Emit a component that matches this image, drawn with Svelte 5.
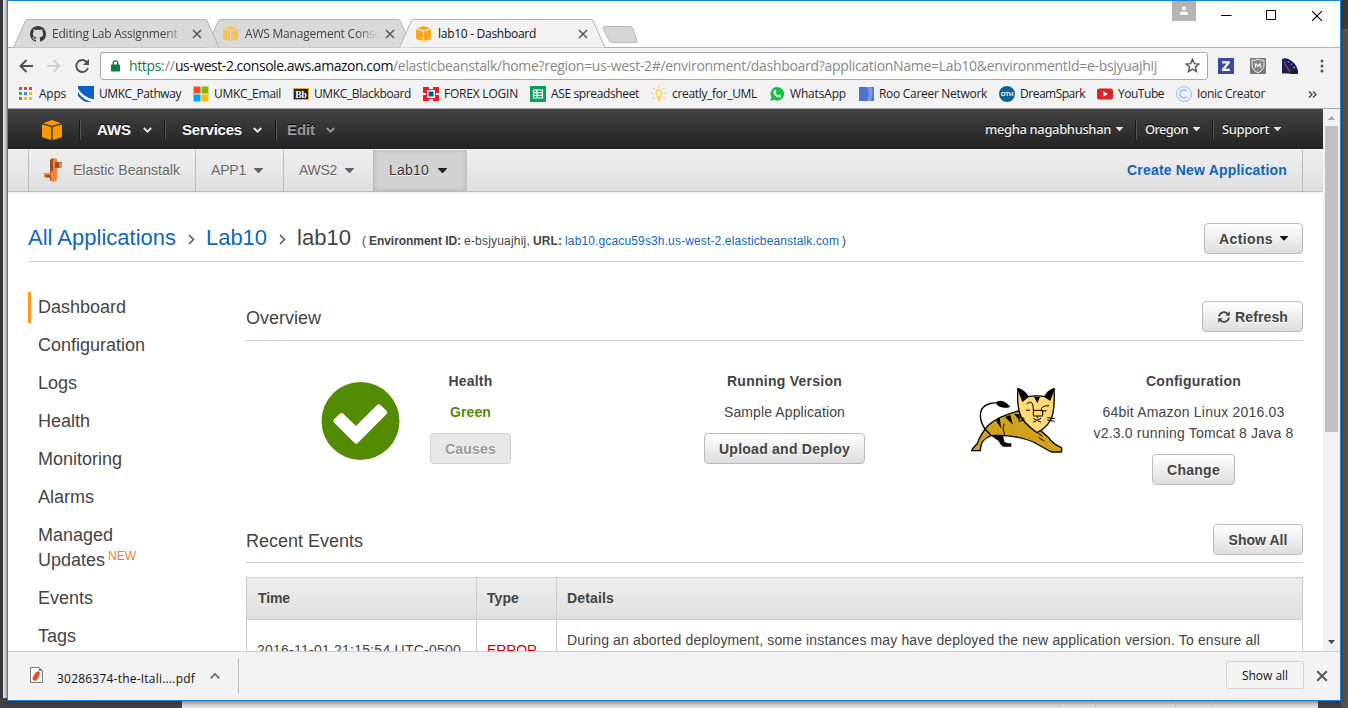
<script>
  const tabs = [
    { title: 'Editing Lab Assignment 1', icon: 'github', width: 135 },
    { title: 'AWS Management Console', icon: 'cube', width: 146 },
    { title: 'lab10 - Dashboard', icon: 'cube', width: 98, active: true }
  ];

  const bookmarks = [
    { label: 'Apps', icon: 'apps', width: 27 },
    { label: 'UMKC_Pathway', icon: 'pathway', width: 82 },
    { label: 'UMKC_Email', icon: 'email', width: 67 },
    { label: 'UMKC_Blackboard', icon: 'blackboard', width: 97 },
    { label: 'FOREX LOGIN', icon: 'forex', width: 74 },
    { label: 'ASE spreadsheet', icon: 'sheet', width: 88 },
    { label: 'creatly_for_UML', icon: 'bulb', width: 85 },
    { label: 'WhatsApp', icon: 'whatsapp', width: 56 },
    { label: 'Roo Career Network', icon: 'roo', width: 108 },
    { label: 'DreamSpark', icon: 'oth', width: 65 },
    { label: 'YouTube', icon: 'youtube', width: 46 },
    { label: 'Ionic Creator', icon: 'ionic', width: 68 }
  ];

  const appColors = ['#ea4335', '#ea4335', '#ea4335', '#34a853', '#4285f4', '#fbbc05', '#34a853', '#fbbc05', '#fbbc05'];

  const sideLinks = ['Dashboard', 'Configuration', 'Logs', 'Health', 'Monitoring', 'Alarms', 'Managed Updates', 'Events', 'Tags'];

  // Spreads or tightens the letters so that a label fills its width.
  function fit(node, width) {
    const natural = node.getBoundingClientRect().width;
    node.style.letterSpacing = `${(width - natural) / node.textContent.length}px`;
  }
</script>

{#snippet cube(size, color)}
  <svg width={size} height={size} viewBox="0 0 20 20">
    <path d="M1 3.2 10 0l9 3.2-9 2.6z" fill={color} />
    <path d="M0 4.6 9.3 7v13L0 17.3zM20 4.6 10.7 7v13l9.3-2.7z" fill={color} />
  </svg>
{/snippet}

{#snippet cross(size, color, weight)}
  <svg width={size} height={size} viewBox="0 0 10 10">
    <path d="M1 1l8 8M9 1l-8 8" stroke={color} stroke-width={weight} fill="none" />
  </svg>
{/snippet}

{#snippet caret(color, w)}
  <svg width={w} height={w / 2 + 0.5} viewBox="0 0 8 4.5"><path d="M0 0h8v.6L4.4 4.5h-.8L0 .6z" fill={color} /></svg>
{/snippet}

{#snippet chevron(color)}
  <svg width="9" height="6" viewBox="0 0 9 6"><path d="M.8 1l3.7 3.6L8.2 1" stroke={color} stroke-width="1.9" fill="none" /></svg>
{/snippet}

{#snippet bookmarkIcon(name)}
  <svg width="16" height="16" viewBox="0 0 16 16">
    {#if name === 'apps'}
      {#each appColors as color, i}
        <rect x={1 + (i % 3) * 5} y={1 + Math.floor(i / 3) * 5} width="3" height="3" fill={color} />
      {/each}
    {:else if name === 'pathway'}
      <path d="M0 0h16v16H0z" fill="#0a62c9" />
      <path d="M0 2.5C3 8 9 12 16 13.5V16h-2C8 14.500 3 11 0 6z" fill="#fff" />
      <path d="M0 10c2 2.500 5 5 8 6H0z" fill="#fff" />
    {:else if name === 'email'}
      <path d="M.5.5h7v7h-7z" fill="#f25022" /><path d="M8.500.5h7v7h-7z" fill="#7fba00" />
      <path d="M.5 8.500h7v7h-7z" fill="#00a4ef" /><path d="M8.500 8.500h7v7h-7z" fill="#ffb900" />
    {:else if name === 'blackboard'}
      <rect x=".5" y="2.500" width="15" height="11" fill="#222" stroke="#e0ab2e" />
      <text x="8" y="11.500" text-anchor="middle" font-family="Liberation Serif, serif" font-weight="bold" font-size="9.5" fill="#fff">Bb</text>
    {:else if name === 'forex'}
      <path d="M0 1h16v14H0z" fill="#fff" />
      <path d="M0 1h6v3H3v3H0zM16 1h-6v3h3v3h3zM0 15h6v-3H3V9H0zM16 15h-6v-3h3V9h3z" fill="#ed1c24" />
      <path d="M3 3h10v10H3z" fill="#ed1c24" /><path d="M4 4h8v8H4z" fill="#fff" />
      <path d="M5.500 5.500h5v5h-5z" fill="#1b4b9b" />
    {:else if name === 'sheet'}
      <path d="M0 0h16v16H0z" fill="#0f9d58" />
      <path d="M3.500 4h9v8h-9zM3.500 6.700h9M3.500 9.300h9M7 4v8" fill="none" stroke="#fff" stroke-width="1.200" />
    {:else if name === 'bulb'}
      <path d="M5 6.500a3 3 0 0 1 6 0c0 2-1.300 2.500-1.300 4.500H6.300C6.300 9 5 8.500 5 6.500z" fill="#fff0b8" stroke="#f5c04b" />
      <path d="M6.300 12.500h3.400M7 14.500h2M8 0v1.500M2.500 2l1.300 1.300M13.500 2l-1.300 1.300M0 7.500h2.500M13.500 7.500H16M2 12.500l1.500-1M14 12.500l-1.500-1" stroke="#f5c04b" stroke-width="1.200" />
    {:else if name === 'whatsapp'}
      <path d="M8.300 1a6.800 6.800 0 1 1-3.200 12.800L1.200 15l1.200-3.700A6.800 6.800 0 0 1 8.300 1z" fill="#12c143" />
      <path d="M5.300 4.200l1.300-.2.9 2-.8 1.100c.5 1.100 1.300 1.900 2.400 2.400l1-.9 2 .9-.2 1.400c-1 1-2.500.9-4.200-.1C6 9.800 4.200 7.300 4.500 5.300z" fill="#fff" />
    {:else if name === 'roo'}
      <path d="M1 1h15v14H1z" fill="#4c73cf" /><path d="M9 1h3.500c2 1 2.500 3 2.300 5.500L13 15H9.500L11 8z" fill="#a9bde9" opacity=".5" /><path d="M14.500 1H16v14h-1.500z" fill="#5379d2" />
    {:else if name === 'oth'}
      <circle cx="8" cy="8" r="8" fill="#0e6698" />
      <text x="8" y="10.200" text-anchor="middle" font-family="Liberation Sans, sans-serif" font-weight="bold" font-size="6" fill="#fff">OTH</text>
    {:else if name === 'youtube'}
      <rect y="2.500" width="16" height="11" rx="2.500" fill="#d9252a" /><path d="M6.300 5.300v5.400L10.800 8z" fill="#fff" />
    {:else if name === 'ionic'}
      <circle cx="8" cy="8" r="7.400" fill="none" stroke="#85c0f7" />
      <path d="M10.700 5.200a4 4 0 1 0 0 5.600" fill="none" stroke="#85c0f7" stroke-width="1.400" />
    {/if}
  </svg>
{/snippet}

<div class="desktop">
  <div class="back-left"></div>
  <div class="back-right"></div>
  <div class="back-bottom"><i></i><i></i><i></i><i></i></div>

  <div class="window">
    <header class="titlebar">
      <div class="tabs">
        {#each tabs as tab, i}
          <div class="tab" class:active={tab.active} style:z-index={tab.active ? 5 : 3 - i}>
            <svg class="shape" width="207" height="29" viewBox="0 0 207 29">
              <path d="M.5 28.500L12.500 1.500Q13 .5 14 .5H192.500Q193.500 .5 194 1.500L206 28.500" />
            </svg>
            <span class="favicon">
              {#if tab.icon === 'github'}
                <svg width="16" height="16" viewBox="0 0 16 16"><path fill="#3c3c3c" d="M8 0C3.580 0 0 3.580 0 8c0 3.540 2.290 6.530 5.470 7.590.4.070.550-.170.550-.380 0-.190-.010-.820-.010-1.490-2.010.370-2.530-.490-2.690-.940-.090-.230-.480-.940-.820-1.130-.280-.150-.680-.520-.010-.530.630-.010 1.080.580 1.230.820.720 1.210 1.870.870 2.330.660.070-.520.280-.870.510-1.070-1.780-.200-3.640-.890-3.640-3.950 0-.870.310-1.590.820-2.150-.080-.200-.360-1.020.080-2.120 0 0 .670-.210 2.200.820.640-.180 1.320-.270 2-.270s1.360.090 2 .270c1.530-1.040 2.200-.820 2.200-.820.440 1.100.160 1.920.080 2.120.510.560.820 1.270.820 2.150 0 3.070-1.870 3.750-3.650 3.950.290.250.540.730.540 1.480 0 1.070-.010 1.930-.010 2.200 0 .210.150.460.550.380A8.010 8.010 0 0 0 16 8c0-4.420-3.580-8-8-8z" /></svg>
              {:else}
                {@render cube(15, tab.active ? '#f2a922' : '#f6c055')}
              {/if}
            </span>
            <span class="tab-title"><span use:fit={tab.width}>{tab.title}</span></span>
            {@render cross(10, '#5a5a5a', 1.6)}
          </div>
        {/each}
        <svg class="new-tab" width="36" height="18" viewBox="0 0 36 18"><path d="M3 .5h25q2 0 3 2l4 12q.500 2-1 2H10q-2 0-3-2L1 2.500q-.5-2 2-2z" fill="#d5d5d5" stroke="#bcbcbc" /></svg>
      </div>
      <div class="controls">
        <span class="profile"><svg width="10" height="9" viewBox="0 0 10 9"><circle cx="5" cy="2.200" r="2" fill="#fff" /><path d="M1 9V7.500Q1 5.500 5 5.500T9 7.500V9z" fill="#fff" /></svg></span>
        <svg width="11" height="11" viewBox="0 0 11 11"><path d="M0 5.500h10.500" stroke="#000" /></svg>
        <svg width="11" height="11" viewBox="0 0 11 11"><path d="M.5.5h9v9h-9z" stroke="#000" fill="none" /></svg>
        {@render cross(12, '#000', 0.95)}
      </div>
    </header>

    <div class="toolbar">
      <svg width="14" height="14" viewBox="0 0 14 14"><path d="M14 7H1.500M7.500 1l-6 6 6 6" stroke="#505050" stroke-width="1.900" fill="none" /></svg>
      <svg width="14" height="14" viewBox="0 0 14 14"><path d="M0 7h12.500M6.500 1l6 6-6 6" stroke="#d0d0d0" stroke-width="1.900" fill="none" /></svg>
      <svg width="15" height="14" viewBox="0 0 15 14"><path d="M12.300 3.600A6 6 0 1 0 13 9" stroke="#505050" stroke-width="1.900" fill="none" /><path d="M14 0v6H8z" fill="#505050" /></svg>
      <div class="omnibox">
        <svg width="9" height="12" viewBox="0 0 9 12"><path d="M2.200 5V3.200a2.300 2.300 0 0 1 4.600 0V5" fill="none" stroke="#0b8043" stroke-width="1.400" /><rect y="4.500" width="9" height="7" rx=".8" fill="#0b8043" /></svg>
        <div class="url"><span class="scheme" use:fit={32}>https</span><span use:fit={14}>://</span><span class="host" use:fit={218}>us-west-2.console.aws.amazon.com</span><span use:fit={764}>/elasticbeanstalk/home?region=us-west-2#/environment/dashboard?applicationName=Lab10&amp;environmentId=e-bsjyuajhij</span></div>
        <svg width="15" height="15" viewBox="0 0 15 15"><path d="M7.500 1.300l1.800 4.300 4.600.4-3.500 3 1.100 4.500-4-2.400-4 2.400 1.100-4.500-3.500-3 4.600-.4z" stroke="#555" stroke-width="1.400" fill="none" /></svg>
      </div>
      <div class="extensions">
        <svg width="16" height="16" viewBox="0 0 16 16"><path d="M0 0h16v16H0z" fill="#3a4a9f" /><path d="M4.200 3.200h7.600v1.900l-4.700 5.600h4.800v2.200H4v-1.900l4.700-5.600H4.200z" fill="#fff" /></svg>
        <svg width="16" height="16" viewBox="0 0 16 16"><rect width="16" height="16" rx="1" fill="#777" /><path d="M2 2q3 1 6-1 3 2 6 1v6q-1 5-6 7-5-2-6-7z" fill="#888" stroke="#eee" /><path d="M5.500 9.500V6h.8L8 8.300 9.700 6h.8v3.500" stroke="#fff" stroke-width="1.200" fill="none" /></svg>
        <svg width="16" height="16" viewBox="0 0 16 16"><path d="M0 15.500V1Q4-1 9 2.500q6 4 7 10.500v2.500z" fill="#1d2058" /><path d="M2 4l1.500 1.200M6 3l.5 1.500M10 5.500L9 7M13 9l-1.800.8" stroke="#8fa0ff" /><path d="M3 6l5 8" stroke="#e03040" stroke-width="1.300" /><path d="M8 12h8v4H8z" fill="#222" /></svg>
        <svg width="4" height="14" viewBox="0 0 4 14"><circle cx="2" cy="2" r="1.500" fill="#555" /><circle cx="2" cy="7" r="1.500" fill="#555" /><circle cx="2" cy="12" r="1.500" fill="#555" /></svg>
      </div>
    </div>

    <nav class="bookmarks">
      {#each bookmarks as mark}
        <a class="bookmark" href="#top">{@render bookmarkIcon(mark.icon)}<span use:fit={mark.width}>{mark.label}</span></a>
      {/each}
      <svg class="more" width="9" height="7" viewBox="0 0 9 7"><path d="M1 .5l3 3-3 3M5 .5l3 3-3 3" stroke="#444" stroke-width="1.400" fill="none" /></svg>
    </nav>

    <div class="viewport">
      <div class="page">
        <nav class="awsbar">
          <span class="logo">{@render cube(20, '#ff9900')}</span>
          <span class="menu aws"><b use:fit={34}>AWS</b>{@render chevron('#e8e8e8')}</span>
          <span class="menu services"><b use:fit={60}>Services</b>{@render chevron('#e8e8e8')}</span>
          <span class="menu edit"><b use:fit={28}>Edit</b>{@render chevron('#999')}</span>
          <span class="account user"><span use:fit={126}>megha nagabhushan</span>{@render caret('#e8e8e8', 7)}</span>
          <span class="account region"><span use:fit={43}>Oregon</span>{@render caret('#e8e8e8', 7)}</span>
          <span class="account support"><span use:fit={47}>Support</span>{@render caret('#e8e8e8', 7)}</span>
        </nav>

        <nav class="appbar">
          <span class="app brand">
            <svg width="18" height="24" viewBox="0 0 18 24">
              <path d="M6 2l4-2v22l-4 1z" fill="#9d5025" /><path d="M10 0l3 1v21l-3 2-3-1V2z" fill="#f58536" />
              <path d="M6 2l3-2v13H6z" fill="#9d5025" /><path d="M11 4h7v5l-2 1h-5z" fill="#9d5025" /><path d="M15 4l3 1v4l-3 1z" fill="#f58536" />
              <path d="M0 15h7v5H2l-2-1z" fill="#f58536" /><path d="M1 17h6v3l-5-1z" fill="#9d5025" />
            </svg>
            <span use:fit={107}>Elastic Beanstalk</span>
          </span>
          <span class="app one"><span use:fit={35}>APP1</span>{@render caret('#666', 9)}</span>
          <span class="app two"><span use:fit={38}>AWS2</span>{@render caret('#666', 9)}</span>
          <span class="app three"><span use:fit={40}>Lab10</span>{@render caret('#222', 9)}</span>
          <span class="create"><b use:fit={160}>Create New Application</b></span>
        </nav>

        <section class="crumbs">
          <h1>
            <a href="#apps" use:fit={148}>All Applications</a>
            <svg width="7" height="11" viewBox="0 0 7 11"><path d="M1 1l4.500 4.500L1 10" stroke="#555" stroke-width="1.500" fill="none" /></svg>
            <a href="#lab" use:fit={61}>Lab10</a>
            <svg width="7" height="11" viewBox="0 0 7 11"><path d="M1 1l4.500 4.500L1 10" stroke="#555" stroke-width="1.500" fill="none" /></svg>
            <span use:fit={54}>lab10</span>
          </h1>
          <p><span>(</span><b use:fit={92}>Environment ID:</b><span use:fit={66}>e-bsjyuajhij,</span><b use:fit={29}>URL:</b><a href="#env" use:fit={274}>lab10.gcacu59s3h.us-west-2.elasticbeanstalk.com</a><span>)</span></p>
          <button class="btn actions"><span use:fit={54}>Actions</span>{@render caret('#111', 8)}</button>
        </section>

        <div class="columns">
          <aside>
            {#each sideLinks as link, i}
              <a class:current={i === 0} href="#side">{link}{#if link === 'Managed Updates'}<sup>NEW</sup>{/if}</a>
            {/each}
          </aside>

          <main>
            <div class="heading">
              <h2>Overview</h2>
              <button class="btn refresh">
                <svg width="12" height="12" viewBox="0 0 12 12"><path d="M1 5.300A5 5 0 0 1 9.800 3M11 6.700A5 5 0 0 1 2.200 9" stroke="#444" stroke-width="1.700" fill="none" /><path d="M11.800.3v4.400H7.400zM.2 11.700V7.300h4.400z" fill="#444" /></svg>
                <span use:fit={53}>Refresh</span>
              </button>
            </div>

            <div class="overview">
              <svg class="status" width="80" height="80" viewBox="0 0 80 80">
                <circle cx="40.500" cy="40" r="39" fill="#548b05" />
                <path d="M14 41.500q-1.200-1.700 0-3.200l6-5.600q1.600-1.300 3.200 0L36 45 57 24q1.700-1.300 3.400 0l6.200 5.800q1.300 1.700 0 3.300L37.800 62q-1.600 1.300-3.200 0z" fill="#fff" />
              </svg>
              <div class="cell health">
                <h3 use:fit={44}>Health</h3>
                <p class="green"><b use:fit={41}>Green</b></p>
                <button class="btn disabled"><span use:fit={51}>Causes</span></button>
              </div>
              <div class="cell version">
                <h3 use:fit={115}>Running Version</h3>
                <p><span use:fit={121}>Sample Application</span></p>
                <button class="btn"><span use:fit={131}>Upload and Deploy</span></button>
              </div>
              <svg class="tomcat" width="94" height="67" viewBox="0 0 282 201">
                <g stroke="#000" stroke-width="4" stroke-linejoin="round">
                  <path d="M82 45q12-5 25 4l11 10q-24 5-36-7z" />
                  <path d="M66 143l31 2 4 19q4 7 21 7v6h-20q-8-1-14-16l-20-14z" />
                  <path d="M5 191q2-7 16-20 14-35 34-56 30-28 90-43l90 79q15 21 38 30 4 4 1 14h-30L190 165q-58-24-127-19-33 12-32 45z" fill="#cfa11d" />
                  <path d="M62 143C24 112 20 62 56 51q14-5 30-3" fill="none" />
                  <path d="M144 5q-4 50 7 79 5 20 50 53 39-20 47-55 7-30 4-77-13 10-24 24-28-5-54 0Q162 12 144 5z" fill="#ffd976" />
                  <path d="M144 5q22 7 29 25l-15 12zM252 5q-20 7-27 24l15 10z" />
                </g>
                <path d="M192 29h18l-8 20zM78 101l16 24-5-32zM105 90l24 23-8-29zM132 80l17 21v-19z" />
                <path d="M170 51q20-18 20 19v16M213 72q-1-17 24-16M180 69l-12 1M216 73l14-2M190 70h28v16M190 87h28M202 88v6M189 106l24-12M213 106l-24-12M143 91l20 3M145 103l19-4M232 92l22 3M232 99l22 4M102 110q-6 16 2 35M205 139l13 9M206 152l17 10" stroke="#000" stroke-width="3" fill="none" />
              </svg>
              <div class="cell config">
                <h3 use:fit={95}>Configuration</h3>
                <p><span use:fit={182}>64bit Amazon Linux 2016.03</span><br /><span use:fit={200}>v2.3.0 running Tomcat 8 Java 8</span></p>
                <button class="btn"><span use:fit={53}>Change</span></button>
              </div>
            </div>

            <div class="heading recent">
              <h2>Recent Events</h2>
              <button class="btn show-events"><span use:fit={59}>Show All</span></button>
            </div>

            <div class="events">
              <div class="row head">
                <div><b use:fit={32}>Time</b></div>
                <div><b use:fit={32}>Type</b></div>
                <div><b use:fit={47}>Details</b></div>
              </div>
              <div class="row entry">
                <div><span use:fit={204}>2016-11-01 21:15:54 UTC-0500</span></div>
                <div class="error"><span use:fit={50}>ERROR</span></div>
                <div class="details"><span use:fit={693}>During an aborted deployment, some instances may have deployed the new application version. To ensure all</span></div>
              </div>
            </div>
          </main>
        </div>
      </div>

      <div class="scrollbar">
        <svg width="7" height="4" viewBox="0 0 7 4"><path d="M0 4h7L3.500 0z" fill="#a3a3a3" /></svg>
        <div class="thumb"></div>
        <svg class="down" width="7" height="4" viewBox="0 0 7 4"><path d="M0 0h7L3.500 4z" fill="#444" /></svg>
      </div>
    </div>

    <footer class="downloads">
      <div class="file">
        <svg class="pdf" width="13" height="16" viewBox="0 0 13 16"><path d="M.5.5h8.500l3.500 3.500v11.500H.5z" fill="#fff" stroke="#777" /><path d="M9 .5V4h3.500z" fill="#777" /><path d="M3 13q-1.500-2 .5-4L5 6.500q1-2 3.500-2.500 2 1 1 4L8 11.500 5.500 14z" fill="#f04923" /></svg>
        <span use:fit={138}>30286374-the-Itali....pdf</span>
        <svg width="10" height="6" viewBox="0 0 10 6"><path d="M.7 5.300L5 1l4.300 4.300" stroke="#666" stroke-width="1.700" fill="none" /></svg>
      </div>
      <button class="show"><span use:fit={46}>Show all</span></button>
      {@render cross(12, '#5a5a5a', 1.7)}
    </footer>
  </div>
</div>

<style>
  .desktop {
    position: relative;
    width: 1348px;
    height: 708px;
    overflow: hidden;
    background: #404145;
    font-family: 'Liberation Sans', Arial, sans-serif;
    color: #444;
  }
  svg { display: block; flex: none; }
  a { text-decoration: none; color: inherit; }
  h1, h2, h3, p { margin: 0; font-weight: normal; }
  span, b { white-space: nowrap; }

  .back-left { position: absolute; left: 0; top: 0; width: 4px; height: 698px; border-left: 3px solid #35363b; background: linear-gradient(90deg, #f0f0f0, #c8c8c8); }
  .back-right { position: absolute; left: 1341px; top: 0; width: 7px; height: 708px; background: linear-gradient(#3b3b3b 29px, #525252 29px); }
  .back-bottom { position: absolute; left: 182px; top: 701px; width: 1136px; height: 7px; box-sizing: border-box; padding-right: 69px; background: linear-gradient(#a9a9a9, #dedede 5px); display: flex; justify-content: flex-end; }
  .back-bottom i { width: 36px; border-left: 1px solid #c2c2c2; }
  .back-bottom i:nth-child(2) { width: 79px; }

  .window {
    position: relative;
    width: 1332px;
    height: 699px;
    margin-left: 7px;
    border: 1px solid #1883d7;
    background: #f2f2f2;
    display: flex;
    flex-direction: column;
    box-shadow: 0 0 5px rgba(0, 0, 0, .35);
  }

  .titlebar { height: 46px; flex: none; background: #fff; border-bottom: 1px solid #b2b2b2; display: flex; justify-content: space-between; font-family: 'Open Sans', 'Noto Sans', sans-serif; font-size: 12px; color: #444; }
  .tabs { display: flex; align-items: flex-end; padding-left: 5px; height: 47px; }
  .tab { position: relative; box-sizing: border-box; width: 207px; height: 29px; padding-left: 17px; margin-right: -14px; display: flex; align-items: center; }
  .tab > :global(*) { position: relative; }
  .tab .shape { position: absolute; left: 0; top: 0; fill: #d9d9d9; stroke: #b2b2b2; }
  .tab.active .shape { fill: #f2f2f2; }
  .tab.active { color: #111; }
  .favicon { width: 22px; display: flex; }
  .tab-title { width: 133px; overflow: hidden; margin-right: 7px; mask-image: linear-gradient(90deg, #000 112px, transparent); }
  .active .tab-title { mask-image: none; }
  .new-tab { margin: 0 0 4px 10px; }
  .controls { display: flex; align-items: flex-start; padding: 9px 17px 0 0; }
  .controls :global(svg) { margin-left: 34px; }
  .profile { width: 24px; height: 20px; margin: -9px -9px 0 0; background: #b4b4b4; display: flex; justify-content: center; padding-top: 5px; box-sizing: border-box; }
  .profile svg { margin: 0; }

  .toolbar { height: 37px; box-sizing: border-box; flex: none; display: flex; align-items: center; padding: 0 0 2px 11px; gap: 14px; }
  .omnibox { width: 1108px; height: 28px; box-sizing: border-box; border: 1px solid #a9a9a9; border-radius: 3px; background: #fff; display: flex; align-items: center; padding-left: 10px; margin-left: -4px; }
  .url { width: 1056px; margin-left: 9px; display: flex; font-family: 'Open Sans', 'Noto Sans', sans-serif; font-size: 14px; color: #888; }
  .scheme { color: #0b8043; }
  .host { color: #111; }
  .extensions { display: flex; gap: 16px; align-items: center; margin-left: -4px; }
  .extensions svg:last-child { margin-left: 6px; }

  .bookmarks { height: 23px; flex: none; display: flex; align-items: center; padding-left: 10px; gap: 12px; border-bottom: 1px solid #a8a8a8; font-family: 'Open Sans', 'Noto Sans', sans-serif; font-size: 12px; color: #222; }
  .bookmark { display: flex; align-items: center; gap: 5px; margin-top: -5px; height: 16px; line-height: 16px; }
  .more { margin: -4px 0 0 31px; }

  .viewport { height: 542px; flex: none; display: flex; overflow: hidden; background: #fff; }
  .page { width: 1315px; overflow: hidden; }
  .awsbar { height: 40px; box-sizing: border-box; background: linear-gradient(#444, #222); display: flex; align-items: center; color: #fff; font-size: 15px; text-shadow: 0 -1px 0 #000; padding-top: 1px; }
  .logo { margin-left: 34px; width: 38px; }
  .menu, .account { height: 20px; flex: none; border-left: 1px solid #555; box-shadow: -1px 0 #181818; box-sizing: border-box; display: flex; align-items: center; gap: 12px; padding-left: 16px; }
  .aws { width: 85px; }
  .services { width: 111px; gap: 11px; }
  .edit { width: 675px; padding-left: 10px; gap: 11px; color: #999; }
  .account { gap: 5px; font: 500 13px/18px 'Noto Sans', sans-serif; padding: 0 0 1px 8px; color: #eee; }
  .user { border-color: transparent; box-shadow: none; width: 185px; padding-left: 33px; }
  .region { width: 77px; }

  .appbar { height: 43px; box-sizing: border-box; border-bottom: 1px solid #bbb; border-top: 1px solid #f6f6f6; background: linear-gradient(#eee, #dfdfdf); display: flex; padding: 0 20px; font-size: 14px; color: #666; box-shadow: 0 1px 3px rgba(0, 0, 0, .1); }
  .app { border-left: 1px solid #bbb; box-sizing: border-box; display: flex; align-items: center; gap: 8px; padding: 0 0 1px 15px; text-shadow: 0 1px 0 #fff; }
  .brand { width: 167px; gap: 11px; }
  .one { width: 88px; }
  .two { width: 90px; }
  .three { width: 94px; gap: 9px; background: #d2d2d2; color: #333; box-shadow: inset 0 0 5px rgba(0, 0, 0, .15); border-right: 1px solid #c4c4c4; }
  .create { flex: 1; display: flex; align-items: center; justify-content: flex-end; padding: 0 15px 2px 0; border-right: 1px solid #bbb; color: #1166bb; }

  .crumbs { height: 70px; box-sizing: border-box; margin: 0 20px; border-bottom: 1px solid #ccc; display: flex; align-items: flex-start; padding-top: 31px; }
  h1 { display: flex; align-items: center; font-size: 22px; line-height: 26px; height: 26px; margin-top: 2px; }
  h1 svg { margin: 3px 11px 0 12px; }
  h1 a, p a { color: #1166bb; }
  .crumbs p { display: flex; gap: 3px; flex: 1; font-size: 12px; line-height: 14px; margin: 11px 0 0 11px; }

  .btn { display: flex; align-items: center; justify-content: center; gap: 7px; height: 31px; box-sizing: border-box; padding: 0 14px; border: 1px solid #bbb; border-radius: 4px; background: linear-gradient(#fff, #ddd); font: bold 14px 'Liberation Sans', Arial, sans-serif; color: #444; text-shadow: 0 1px 0 #fff; flex: none; }
  .disabled { background: #e8e8e8; border-color: #d0d0d0; color: #999; }
  .refresh { gap: 5px; padding: 0 14px 0 15px; }
  .actions { width: 99px; }
  .show-events { width: 90px; }

  .columns { display: flex; padding: 0 20px; }
  aside { width: 218px; padding-top: 30px; font-size: 18px; line-height: 25px; flex: none; }
  aside a { display: block; padding: 3px 75px 3px 7px; margin-bottom: 7px; border-left: 3px solid transparent; }
  aside a.current { border-color: #ff9915; }
  sup { font-size: 12px; line-height: 0; color: #f07c35; margin-left: 3px; vertical-align: 6px; }

  main { width: 1057px; }
  .heading { height: 40px; margin-top: 39px; box-sizing: border-box; border-bottom: 1px solid #ccc; display: flex; justify-content: space-between; align-items: flex-start; }
  h2 { font-size: 18px; line-height: 35px; }

  .overview { height: 183px; display: flex; align-items: flex-start; font-size: 14px; line-height: 21px; }
  .status { margin: 40px 0 0 74px; }
  .cell { display: flex; flex-direction: column; align-items: center; padding-top: 30px; }
  .cell h3 { font-size: 14px; font-weight: bold; line-height: 21px; }
  .cell p { margin: 10px 0; text-align: center; }
  .green { color: #548b05; }
  .health { width: 81px; margin-left: 30px; }
  .version { width: 161px; margin-left: 193px; }
  .tomcat { margin: 46px 0 0 105px; }
  .config { width: 201px; margin-left: 29px; }

  .heading.recent { margin-top: 0; height: 39px; }
  .events { margin-top: 14px; border: 1px solid #ccc; }
  .row { display: grid; grid-template-columns: 229px 80px 746px; font-size: 14px; }
  .row > div { padding-left: 10px; line-height: 41px; height: 41px; }
  .row > div + div { border-left: 1px solid #ccc; }
  .head { background: linear-gradient(#eee, #dfdfdf); border-bottom: 1px solid #ccc; }
  .head > div:first-child { padding-left: 11px; }
  .entry > div { height: 61px; line-height: 61px; }
  .entry > .details { line-height: 41px; }
  .error { color: #c00; }

  .scrollbar { width: 17px; background: #f1f1f1; display: flex; flex-direction: column; align-items: center; padding-top: 7px; box-sizing: border-box; }
  .thumb { width: 13px; height: 306px; margin-top: 6px; background: #c1c1c1; }
  .down { margin-top: 208px; }

  .downloads { flex: 1; border-top: 1px solid #ccc; display: flex; align-items: center; font-family: 'Open Sans', 'Noto Sans', sans-serif; font-size: 12px; color: #111; padding-right: 12px; }
  .file { height: 36px; margin-right: auto; padding-left: 22px; width: 208px; border-right: 1px solid #c2c2c2; display: flex; align-items: center; }
  .file span { margin: 4px 15px 0 14px; }
  .pdf { margin-top: -2px; }
  .show { width: 78px; height: 28px; padding: 0; margin: 0 12px 2px 0; border: 1px solid #d4d4d4; border-radius: 2px; background: #f4f4f4; font: inherit; color: inherit; }
</style>
